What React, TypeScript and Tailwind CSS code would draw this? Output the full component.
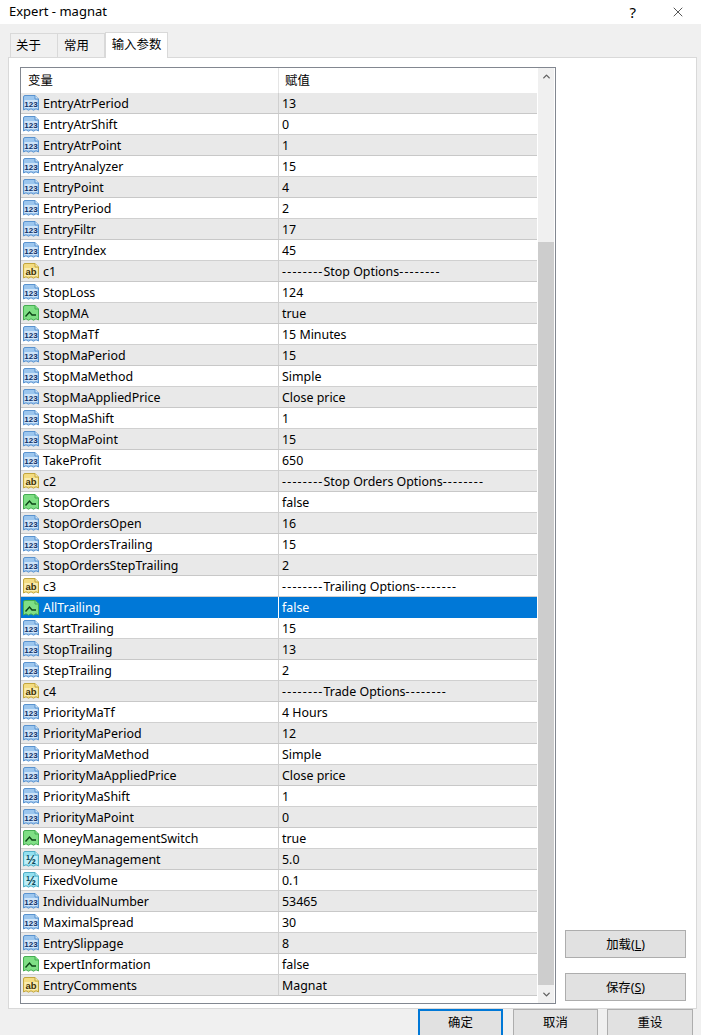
import { ChevronDown, ChevronUp, X } from 'lucide-react';

type Kind = 'int' | 'str' | 'bool' | 'dbl';

const rows: [Kind, string, string][] = [
  ['int', 'EntryAtrPeriod', '13'],
  ['int', 'EntryAtrShift', '0'],
  ['int', 'EntryAtrPoint', '1'],
  ['int', 'EntryAnalyzer', '15'],
  ['int', 'EntryPoint', '4'],
  ['int', 'EntryPeriod', '2'],
  ['int', 'EntryFiltr', '17'],
  ['int', 'EntryIndex', '45'],
  ['str', 'c1', '--------Stop Options--------'],
  ['int', 'StopLoss', '124'],
  ['bool', 'StopMA', 'true'],
  ['int', 'StopMaTf', '15 Minutes'],
  ['int', 'StopMaPeriod', '15'],
  ['int', 'StopMaMethod', 'Simple'],
  ['int', 'StopMaAppliedPrice', 'Close price'],
  ['int', 'StopMaShift', '1'],
  ['int', 'StopMaPoint', '15'],
  ['int', 'TakeProfit', '650'],
  ['str', 'c2', '--------Stop Orders Options--------'],
  ['bool', 'StopOrders', 'false'],
  ['int', 'StopOrdersOpen', '16'],
  ['int', 'StopOrdersTrailing', '15'],
  ['int', 'StopOrdersStepTrailing', '2'],
  ['str', 'c3', '--------Trailing Options--------'],
  ['bool', 'AllTrailing', 'false'],
  ['int', 'StartTrailing', '15'],
  ['int', 'StopTrailing', '13'],
  ['int', 'StepTrailing', '2'],
  ['str', 'c4', '--------Trade Options--------'],
  ['int', 'PriorityMaTf', '4 Hours'],
  ['int', 'PriorityMaPeriod', '12'],
  ['int', 'PriorityMaMethod', 'Simple'],
  ['int', 'PriorityMaAppliedPrice', 'Close price'],
  ['int', 'PriorityMaShift', '1'],
  ['int', 'PriorityMaPoint', '0'],
  ['bool', 'MoneyManagementSwitch', 'true'],
  ['dbl', 'MoneyManagement', '5.0'],
  ['dbl', 'FixedVolume', '0.1'],
  ['int', 'IndividualNumber', '53465'],
  ['int', 'MaximalSpread', '30'],
  ['int', 'EntrySlippage', '8'],
  ['bool', 'ExpertInformation', 'false'],
  ['str', 'EntryComments', 'Magnat'],
];

const iconColors: Record<Kind, { fill: string; stroke: string; ink: string; inner: string; label: string }> = {
  int: { fill: '#9cc6ee', stroke: '#5a93cf', ink: '#0f2f66', inner: '#cfe4f8', label: '123' },
  str: { fill: '#f4dc82', stroke: '#c2a63e', ink: '#3d3005', inner: '#f9ecb0', label: 'ab' },
  bool: { fill: '#7fdf85', stroke: '#45ac52', ink: '#0c4416', inner: '#7fdf85', label: '' },
  dbl: { fill: '#93e0f0', stroke: '#52aec6', ink: '#0d4a5c', inner: '#bfeef7', label: '½' },
};

function TypeIcon({ kind }: { kind: Kind }) {
  const c = iconColors[kind];
  return (
    <svg width="16" height="16" viewBox="0 0 16 16" className="shrink-0">
      <path
        d="M0.5 2 Q0.5 0.5 2 0.5 H12 L15.5 4 V15 L13 13.8 L10.5 15.2 L8 13.8 L5.5 15.2 L3 13.8 L0.5 15 Z"
        fill={c.fill}
        stroke={c.stroke}
      />
      <path d="M12 0.5 V4 H15.5" fill={c.inner} stroke={c.stroke} />
      {kind === 'bool' ? (
        <path d="M2.5 11.5 L6.5 7 L9 10 H13" fill="none" stroke={c.ink} strokeWidth="1.4" />
      ) : (
        <>
          <rect x="1.5" y="5" width="13" height="8" fill={c.inner} />
          <text
            x="8"
            y={kind === 'dbl' ? 12.5 : 11.8}
            textAnchor="middle"
            fontSize={kind === 'int' ? 8 : kind === 'dbl' ? 12 : 9.5}
            fontWeight="700"
            fontFamily="'Liberation Sans', sans-serif"
            fill={c.ink}
          >
            {c.label}
          </text>
        </>
      )}
    </svg>
  );
}

// the dashes around section titles are wider in the original font
function Value({ text }: { text: string }) {
  const m = text.match(/^(-+)(.*?)(-+)$/);
  if (!m) return <span className="whitespace-nowrap pl-[3px] pt-[2px]">{text}</span>;
  return (
    <span className="whitespace-nowrap pl-[3px] pt-[2px]">
      <span className="tracking-[1.2px]">{m[1]}</span>
      {m[2]}
      <span className="tracking-[1.2px]">{m[3]}</span>
    </span>
  );
}

function Row({ kind, name, value, index }: { kind: Kind; name: string; value: string; index: number }) {
  const selected = name === 'AllTrailing';
  const shaded = index % 2 === 0;
  return (
    <div
      className={`flex h-[21px] items-center ${
        selected
          ? 'bg-[#0078d7] text-white'
          : shaded
            ? 'border-b border-[#c8c8c8] bg-[#e9e9e9]'
            : 'border-b border-[#d0d0d0] bg-white'
      }`}
    >
      <div className="flex h-full w-[257px] items-center gap-1 pl-[2px]">
        <TypeIcon kind={kind} />
        <span className="whitespace-nowrap pt-[2px]">{name}</span>
      </div>
      <div className={`h-full w-px ${selected ? 'bg-white' : 'bg-[#d0d0d0]'}`}></div>
      <Value text={value} />
    </div>
  );
}

function SideButton({ label, hotkey }: { label: string; hotkey: string }) {
  return (
    <button className="flex h-[28px] w-[121px] items-center justify-center border border-[#adadad] bg-[#e1e1e1] pt-[2px]">
      {label}(<span className="underline">{hotkey}</span>)
    </button>
  );
}

export default function App() {
  return (
    <div
      className="flex h-[1035px] w-[701px] flex-col overflow-hidden bg-[#f0f0f0] text-[12.4px] text-black"
      style={{ fontFamily: '"Noto Sans", "Noto Sans CJK SC", sans-serif' }}
    >
      {/* Title bar */}
      <div className="flex h-[24px] shrink-0 items-center justify-between bg-white pl-[9px] pr-[15px] text-[13px]">
        <span>Expert - magnat</span>
        <div className="flex items-center gap-[34px]">
          <span className="text-[15px]">?</span>
          <X size={16} strokeWidth={1} />
        </div>
      </div>

      {/* Tabs */}
      <div className="flex h-[33px] shrink-0 items-end pl-[10px]">
        <div className="flex h-[24px] w-[48px] items-center border border-b-0 border-[#d9d9d9] bg-[#f0f0f0] pl-[5px] pt-[2px]">关于</div>
        <div className="flex h-[24px] w-[47px] items-center border border-b-0 border-l-0 border-[#d9d9d9] bg-[#f0f0f0] pl-[6px] pt-[2px]">常用</div>
        <div className="relative top-px z-10 flex h-[26px] w-[63px] items-center justify-center border border-b-0 border-[#d9d9d9] bg-white">输入参数</div>
      </div>

      {/* Panel */}
      <div className="mx-[8px] flex h-[952px] w-[689px] shrink-0 gap-[9px] border border-[#d9d9d9] bg-white pb-[3px] pl-[11px] pt-[9px]">
        <div className="flex h-[937px] w-[536px] shrink-0 border border-[#828790] bg-white">
          <div className="w-[516px] shrink-0">
            <div className="flex h-[25px] items-center">
              <div className="flex h-full w-[257px] items-center pl-[7px] pt-[2px]">变量</div>
              <div className="h-full w-px bg-[#e5e5e5]"></div>
              <span className="pl-[6px] pt-[2px]">赋值</span>
            </div>
            {rows.map(([kind, name, value], i) => (
              <Row key={name} kind={kind} name={name} value={value} index={i} />
            ))}
          </div>

          {/* Scrollbar */}
          <div className="ml-px flex w-[16px] flex-col bg-[#f0f0f0]">
            <div className="flex h-[17px] items-center justify-center text-[#606060]">
              <ChevronUp size={11} strokeWidth={3} />
            </div>
            <div className="h-[157px]"></div>
            <div className="flex-1 bg-[#cdcdcd]"></div>
            <div className="flex h-[18px] items-center justify-center text-[#606060]">
              <ChevronDown size={11} strokeWidth={3} />
            </div>
          </div>
        </div>

        <div className="flex flex-1 flex-col justify-end gap-[15px] pb-[4px]">
          <SideButton label="加载" hotkey="L" />
          <SideButton label="保存" hotkey="S" />
        </div>
      </div>

      {/* Footer */}
      <div className="flex shrink-0 justify-end pr-[8px]">
        <button className="flex h-[28px] w-[85px] items-center justify-center border-2 border-[#0078d7] bg-[#e1e1e1]">确定</button>
        <button className="ml-[10px] flex h-[28px] w-[85px] items-center justify-center border border-[#adadad] bg-[#e1e1e1]">取消</button>
        <button className="ml-[9px] flex h-[28px] w-[86px] items-center justify-center border border-[#adadad] bg-[#e1e1e1]">重设</button>
      </div>
    </div>
  );
}
